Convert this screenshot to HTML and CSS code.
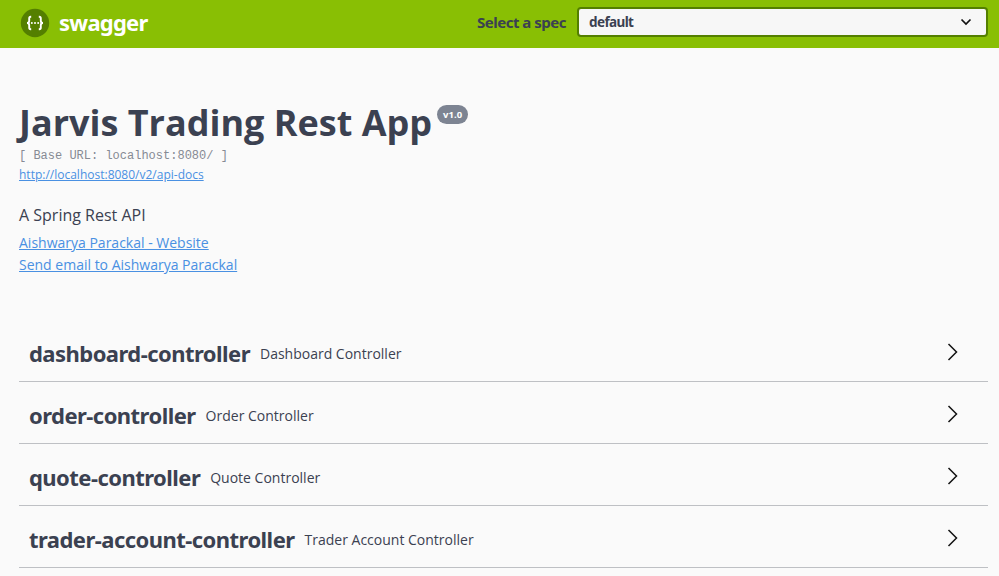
FILE: index.html
```html
<!DOCTYPE html>
<html lang="en">
<head>
<meta charset="utf-8">
<title>Swagger UI</title>
<link rel="stylesheet" href="styles.css">
</head>
<body>
<header class="topbar">
  <a class="brand">
    <svg class="logo" width="30" height="30" viewBox="0 0 30 30" aria-hidden="true">
      <circle cx="15" cy="15" r="14.2" fill="#547f00"/>
      <g fill="none" stroke="#fff" stroke-width="1.900">
        <path d="M11.200 8.800h-.5q-1.500 0-1.500 1.700v2.200q0 2.300-2.200 2.300 2.200 0 2.200 2.300v2.200q0 1.700 1.500 1.700h.5"/>
        <path d="M18.800 8.800h.5q1.500 0 1.500 1.700v2.200q0 2.300 2.200 2.300-2.200 0-2.200 2.300v2.200q0 1.700-1.500 1.700h-.5"/>
      </g>
      <g fill="#fff"><circle cx="11.800" cy="15" r="1"/><circle cx="15" cy="15" r="1"/><circle cx="18.200" cy="15" r="1"/></g>
    </svg>
    <span class="brand-name">swagger</span>
  </a>
  <div class="spec">
    <span class="spec-label">Select a spec</span>
    <div class="select"><span class="select-value">default</span>
      <svg width="12" height="8" viewBox="0 0 12 8"><path d="M1.500 1.500 6 6l4.500-4.500" fill="none" stroke="#111" stroke-width="1.700"/></svg>
    </div>
  </div>
</header>
<main>
  <section class="info">
    <h1 class="title"><span>Jarvis Trading Rest App</span><span class="version">v1.0</span></h1>
    <div class="base">[ Base URL: localhost:8080/ ]</div>
    <a class="docs">http://localhost:8080/v2/api-docs</a>
    <p class="description">A Spring Rest API</p>
    <a class="contact">Aishwarya Parackal - Website</a>
    <a class="contact">Send email to Aishwarya Parackal</a>
  </section>
  <section class="tags">
    <div class="tag"><h2>dashboard-controller</h2><span>Dashboard Controller</span><svg class="arrow" viewBox="0 0 12 18"><path d="m1.500 1 8 8-8 8"/></svg></div>
    <div class="tag"><h2>order-controller</h2><span>Order Controller</span><svg class="arrow" viewBox="0 0 12 18"><path d="m1.500 1 8 8-8 8"/></svg></div>
    <div class="tag"><h2>quote-controller</h2><span>Quote Controller</span><svg class="arrow" viewBox="0 0 12 18"><path d="m1.500 1 8 8-8 8"/></svg></div>
    <div class="tag"><h2>trader-account-controller</h2><span>Trader Account Controller</span><svg class="arrow" viewBox="0 0 12 18"><path d="m1.500 1 8 8-8 8"/></svg></div>
  </section>
</main>
</body>
</html>
```
FILE: styles.css
```css
* { box-sizing: border-box; }
html { overflow: hidden; background: #fafafa; }
body { margin: 0; color: #3b4151; font-family: "Open Sans", sans-serif; }
.topbar { display: flex; justify-content: space-between; height: 48px; padding: 7px 11px 0 20px; background: #89bf04; }
.brand { display: flex; height: 31px; }
.logo { margin-top: 1px; }
.brand-name { margin-left: 9px; color: #fff; font: 700 22px/31px "Noto Sans", sans-serif; letter-spacing: -.75px; }
.spec { display: flex; height: 30px; }
.spec-label { width: 90px; margin-right: 10px; font: 700 15px/30px "Noto Sans", sans-serif; letter-spacing: -.5px; white-space: nowrap; }
.select { display: flex; align-items: center; justify-content: space-between; width: 411px; padding: 0 14px 0 10px; border: 2px solid #547f00; border-radius: 4px; background: #f7f7f7; font: 700 13.500px "Noto Sans", sans-serif; letter-spacing: -.6px; }
.info { height: 272px; padding: 51px 19px 0; }
.title { display: flex; height: 48px; margin: 0; font-size: 36px; line-height: 48px; white-space: nowrap; }
.version { height: 19px; margin: 6px 0 0 5px; padding: 0 6px; border-radius: 10px; background: #7d8492; color: #fff; font-size: 9.500px; line-height: 19px; }
.base { height: 17px; font: 12px/19px "Liberation Mono", monospace; color: #868a94; }
.docs { display: block; height: 20px; color: #4990e2; font-size: 12px; line-height: 22px; text-decoration: underline; }
.description { height: 24px; margin: 19px 0 5px; font-size: 16px; line-height: 24px; }
.contact { display: block; height: 22px; color: #4990e2; font-size: 14px; line-height: 22px; text-decoration: underline; }
.tags { padding: 0 11px 0 19px; }
.tag { display: flex; align-items: center; height: 62px; padding: 6px 29px 0 10px; border-bottom: 1px solid #bec0c4; font-size: 14px; white-space: nowrap; }
.tag h2 { margin: 0 10px 2px 0; font: 700 22px/30px "Noto Sans", sans-serif; letter-spacing: -.54px; }
.arrow { width: 12px; height: 18px; margin: -4px 0 0 auto; fill: none; stroke: #111; stroke-width: 1.500; }
```
